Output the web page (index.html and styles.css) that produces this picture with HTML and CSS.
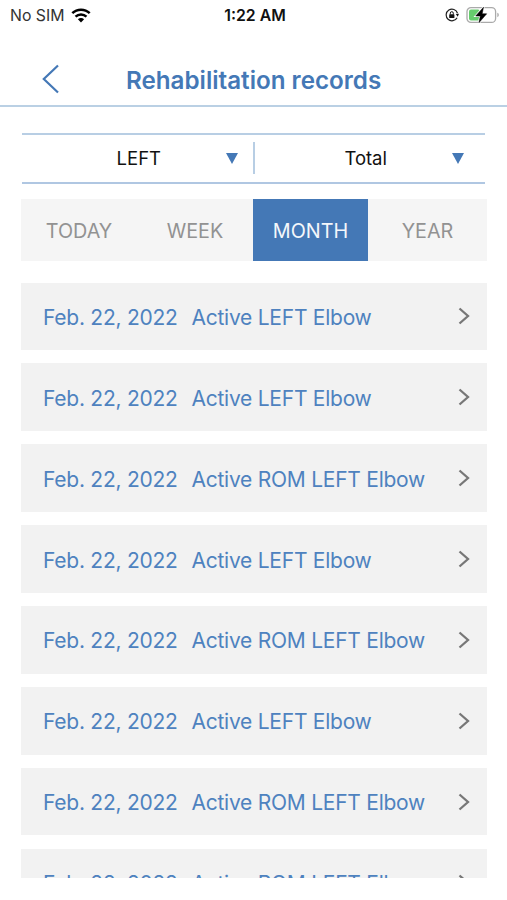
FILE: index.html
```html
<!DOCTYPE html>
<html lang="en">
<head>
    <meta charset="UTF-8">
    <meta name="viewport" content="width=device-width, initial-scale=1.0">
    <title>Rehabilitation records</title>
    <link rel="stylesheet" href="styles.css">
</head>
<body>

    <div class="status-bar">
        <div class="carrier">
            <span>No SIM</span>
            <svg class="wifi" width="20" height="15" viewBox="0 0 20 15">
                <path d="M1.3 5.2 C6.2 0.5 13.8 0.5 18.7 5.2" fill="none" stroke="#000" stroke-width="2.5"/>
                <path d="M4.5 8.7 C7.6 5.7 12.4 5.7 15.5 8.7" fill="none" stroke="#000" stroke-width="2.4"/>
                <path d="M10 14.5 L6.9 11.2 C8.6 9.6 11.4 9.6 13.1 11.2 Z"/>
            </svg>
        </div>
        <div class="clock">1:22 AM</div>
        <div class="indicators">
            <svg width="14" height="14" viewBox="0 0 14 14">
                <path d="M12.5 5.2 A5.8 5.8 0 1 0 12.1 9.7" fill="none" stroke="#222" stroke-width="1.2"/>
                <path d="M10.8 6 L14 5.8 L12.7 8.8 Z" fill="#111"/>
                <rect x="4.2" y="6.3" width="5.2" height="3.8" rx="0.6" fill="#111"/>
                <path d="M5.3 6.5 V5.2 A1.5 1.5 0 0 1 8.3 5.2 V6.5" fill="none" stroke="#111" stroke-width="1"/>
            </svg>
            <svg class="battery" width="34" height="18" viewBox="0 0 34 18">
                <rect x="1" y="1.6" width="28.6" height="14.8" rx="4" fill="#fff" stroke="#aaa" stroke-width="1.3"/>
                <path d="M31.3 6.8 C33.3 7.2 33.3 10.8 31.3 11.2 Z" fill="#aaa"/>
                <rect x="3" y="3.6" width="11" height="10.8" rx="2" fill="#66cc6d"/>
                <path d="M17.5 1.2 L9.7 10 H14.3 L12.9 16.8 L20.7 7.8 H16.2 Z" stroke="#fff" stroke-width="2"/>
                <path d="M17.5 1.2 L9.7 10 H14.3 L12.9 16.8 L20.7 7.8 H16.2 Z" stroke="#000" stroke-width="0.5"/>
            </svg>
        </div>
    </div>

    <header class="header">
        <svg class="back" width="18" height="30" viewBox="0 0 18 30">
            <path d="M16 1.5 L1.8 15 L16 28.5" fill="none" stroke="#4478b6" stroke-width="2.2"/>
        </svg>
        <h1>Rehabilitation records</h1>
    </header>

    <div class="filters">
        <div class="filter">
            <span>LEFT</span>
            <i class="arrow"></i>
        </div>
        <div class="filter">
            <span>Total</span>
            <i class="arrow"></i>
        </div>
    </div>

    <div class="tabs">
        <div class="tab">TODAY</div>
        <div class="tab">WEEK</div>
        <div class="tab active">MONTH</div>
        <div class="tab">YEAR</div>
    </div>

    <div class="records">
        <div class="record">
            <span class="date">Feb. 22, 2022</span>
            <span class="name">Active LEFT Elbow</span>
            <svg class="next" width="12" height="18" viewBox="0 0 12 18"><path d="M1.5 1.5 L10 9 L1.5 16.5"/></svg>
        </div>
        <div class="record">
            <span class="date">Feb. 22, 2022</span>
            <span class="name">Active LEFT Elbow</span>
            <svg class="next" width="12" height="18" viewBox="0 0 12 18"><path d="M1.5 1.5 L10 9 L1.5 16.5"/></svg>
        </div>
        <div class="record">
            <span class="date">Feb. 22, 2022</span>
            <span class="name">Active ROM LEFT Elbow</span>
            <svg class="next" width="12" height="18" viewBox="0 0 12 18"><path d="M1.5 1.5 L10 9 L1.5 16.5"/></svg>
        </div>
        <div class="record">
            <span class="date">Feb. 22, 2022</span>
            <span class="name">Active LEFT Elbow</span>
            <svg class="next" width="12" height="18" viewBox="0 0 12 18"><path d="M1.5 1.5 L10 9 L1.5 16.5"/></svg>
        </div>
        <div class="record">
            <span class="date">Feb. 22, 2022</span>
            <span class="name">Active ROM LEFT Elbow</span>
            <svg class="next" width="12" height="18" viewBox="0 0 12 18"><path d="M1.5 1.5 L10 9 L1.5 16.5"/></svg>
        </div>
        <div class="record">
            <span class="date">Feb. 22, 2022</span>
            <span class="name">Active LEFT Elbow</span>
            <svg class="next" width="12" height="18" viewBox="0 0 12 18"><path d="M1.5 1.5 L10 9 L1.5 16.5"/></svg>
        </div>
        <div class="record">
            <span class="date">Feb. 22, 2022</span>
            <span class="name">Active ROM LEFT Elbow</span>
            <svg class="next" width="12" height="18" viewBox="0 0 12 18"><path d="M1.5 1.5 L10 9 L1.5 16.5"/></svg>
        </div>
        <div class="record">
            <span class="date">Feb. 22, 2022</span>
            <span class="name">Active ROM LEFT Elbow</span>
            <svg class="next" width="12" height="18" viewBox="0 0 12 18"><path d="M1.5 1.5 L10 9 L1.5 16.5"/></svg>
        </div>
    </div>

</body>
</html>
```
FILE: styles.css
```css
* {
    box-sizing: border-box;
}
body {
    margin: 0;
    height: 900px;
    overflow: hidden;
    background-color: #fff;
    color: #111;
    font-family: Inter, "Liberation Sans", sans-serif;
    display: flex;
    flex-direction: column;
}

/* Status bar */
.status-bar {
    display: grid;
    grid-template-columns: 1fr auto 1fr;
    align-items: center;
    flex-shrink: 0;
    height: 30px;
    padding: 0 7px 0 10px;
    font-size: 15.8px;
    line-height: 31px;
}
.carrier {
    display: flex;
    align-items: center;
    gap: 7px;
    color: #333;
}
.wifi {
    margin-top: -1px;
}
.clock {
    font-weight: 600;
    color: #111;
}
.indicators {
    display: flex;
    align-items: center;
    justify-content: flex-end;
    gap: 7px;
    margin-top: -2px;
}
.indicators svg:first-child {
    margin-top: 1px;
}

/* Header */
.header {
    display: flex;
    align-items: center;
    flex-shrink: 0;
    height: 76.6px;
    padding: 24px 0 0 42px;
    border-bottom: 2px solid #bad0e4;
}
h1 {
    margin: 3px 0 0 66px;
    font-size: 24.2px;
    line-height: 30px;
    font-weight: 600;
    color: #4478b6;
    white-space: nowrap;
}

/* Filters */
.filters {
    display: flex;
    align-items: center;
    flex-shrink: 0;
    height: 51px;
    margin: 26.4px 22px 0;
    border-top: 2px solid #b8cee4;
    border-bottom: 2px solid #b0c7e2;
}
.filter {
    display: flex;
    align-items: center;
    justify-content: flex-end;
    width: 233px;
    height: 32px;
    padding-right: 15px;
    font-size: 18.5px;
    border-right: 2px solid #b8cee4;
}
.filter:last-child {
    width: 230px;
    padding-right: 21px;
    border-right: 0;
}
.arrow {
    margin-left: 65px;
    border: 6px solid transparent;
    border-top: 11px solid #4478b6;
    border-bottom: 0;
}

/* Period tabs */
.tabs {
    display: flex;
    flex-shrink: 0;
    height: 62px;
    margin: 15px 20px 0 21px;
    background-color: #f5f5f5;
    color: #929292;
    font-size: 19.8px;
    line-height: 64px;
    text-align: center;
}
.tab {
    width: 116px;
}
.active {
    width: 115px;
    background-color: #4478b6;
    color: #f4f7fb;
}
.tab:last-child {
    width: 119px;
}

/* Records, the last one is cut by the end of the scroll area */
.records {
    display: flex;
    flex-direction: column;
    flex-shrink: 0;
    gap: 13.4px;
    height: 595.4px;
    margin: 21.6px 20px 0 21px;
    overflow: hidden;
}
.record {
    display: flex;
    align-items: center;
    flex-shrink: 0;
    height: 67.5px;
    padding: 2px 17px 0 22px;
    background-color: #f2f2f2;
    color: #4e82bf;
    font-size: 21px;
    letter-spacing: -0.25px;
    white-space: nowrap;
}
.date {
    width: 148.5px;
}
.next {
    margin: -2px 0 0 auto;
    fill: none;
    stroke: #777;
    stroke-width: 2.3;
}
```
